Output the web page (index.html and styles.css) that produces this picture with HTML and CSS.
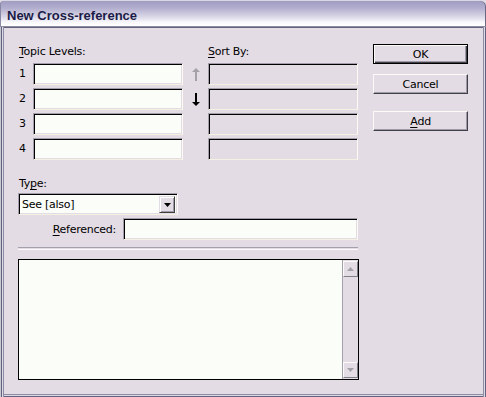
FILE: index.html
```html
<!DOCTYPE html>
<html lang="en">
<head>
  <meta charset="UTF-8">
  <title>New Cross-reference</title>
  <link rel="stylesheet" href="styles.css">
</head>
<body>
  <div class="dialog">
    <div class="titlebar">New Cross-reference</div>

    <div class="content">
      <div class="main">
        <div class="levels">
          <div class="label num-span"><u>T</u>opic Levels:</div>
          <div></div>
          <div class="label"><u>S</u>ort By:</div>

          <div class="num">1</div>
          <div class="edit"></div>
          <div class="arrow">
            <svg width="8" height="13" viewBox="0 0 8 13"><path d="M4 0 L8 4 L5 4 L5 13 L3 13 L3 4 L0 4 Z" fill="#a4a0a8"/></svg>
          </div>
          <div class="edit disabled"></div>

          <div class="num">2</div>
          <div class="edit"></div>
          <div class="arrow">
            <svg width="8" height="13" viewBox="0 0 8 13"><path d="M4 13 L8 9 L5 9 L5 0 L3 0 L3 9 L0 9 Z" fill="#000"/></svg>
          </div>
          <div class="edit disabled"></div>

          <div class="num">3</div>
          <div class="edit"></div>
          <div class="arrow"></div>
          <div class="edit disabled"></div>

          <div class="num">4</div>
          <div class="edit"></div>
          <div class="arrow"></div>
          <div class="edit disabled"></div>
        </div>

        <div class="label type-label">Ty<u>p</u>e:</div>
        <div class="select">
          <span class="select-text">See [also]</span>
          <span class="drop-btn">
            <svg width="7" height="4" viewBox="0 0 7 4"><path d="M0 0 H7 L3.5 4 Z" fill="#000"/></svg>
          </span>
        </div>

        <div class="ref-row">
          <span class="label"><u>R</u>eferenced:</span>
          <div class="edit ref-edit"></div>
        </div>

        <div class="separator"></div>

        <div class="listbox">
          <div class="list-area"></div>
          <div class="scrollbar">
            <div class="scroll-btn">
              <svg width="7" height="4" viewBox="0 0 7 4"><path d="M3.5 0 L7 4 H0 Z" fill="#a4a0a8"/></svg>
            </div>
            <div class="scroll-track"></div>
            <div class="scroll-btn">
              <svg width="7" height="4" viewBox="0 0 7 4"><path d="M0 0 H7 L3.5 4 Z" fill="#a4a0a8"/></svg>
            </div>
          </div>
        </div>
      </div>

      <div class="buttons">
        <div class="button default">OK</div>
        <div class="button">Cancel</div>
        <div class="button add"><u>A</u>dd</div>
      </div>
    </div>
  </div>
</body>
</html>
```

FILE: styles.css
```css
body {
  margin: 0;
  background: #e4dce4;
  font-family: "DejaVu Sans", sans-serif;
  font-size: 11px;
  letter-spacing: -0.25px;
  color: #000;
}
.dialog {
  width: 486px;
  height: 397px;
  display: flex;
  flex-direction: column;
  background: #e4dce4;
  box-sizing: border-box;
}
.titlebar {
  height: 27px;
  box-sizing: border-box;
  padding: 7px 0 0 7px;
  font-family: "Liberation Sans", sans-serif;
  font-weight: bold;
  font-size: 13px;
  letter-spacing: 0;
  color: #1c1c48;
  background: linear-gradient(#a09cc2 0%, #b4b0d0 30%, #dcdae8 65%, #f8f8fc 85%, #ffffff 100%);
  border-top: 1px solid #d8d8e4;
  border-bottom: 1px solid #8e8ca4;
  border-radius: 4px 6px 0 0;
  box-shadow: inset 1px 0 #8a88a4, inset -1px 0 #6a6884;
}
.content {
  flex: 1;
  display: flex;
  padding: 18px 0 0 18px;
  box-shadow: inset 1px 0 #c8c8d4, inset 2px 0 #62627c, inset 3px 0 #dcdae4, inset 4px 0 #8e8ca4,
              inset -1px 0 #62627c, inset -2px 0 #dcdae4, inset -3px 0 #8e8ca4,
              inset 0 -1px #62627c, inset 0 -2px #dcdae4, inset 0 -3px #8e8ca4,
              inset 0 1px #62627c;
}
.main {
  width: 340px;
}
.label {
  line-height: 13px;
}
.levels {
  display: grid;
  grid-template-columns: 15px 150px 25px 150px;
  grid-template-rows: 15px;
  grid-auto-rows: 22px;
  row-gap: 3px;
}
.num-span {
  grid-column: 1 / span 2;
  padding-left: 1px;
}
.num {
  line-height: 22px;
  padding-left: 1px;
}
.edit {
  box-sizing: border-box;
  background: #fbfdf9;
  border: 1px solid;
  border-color: #a49eac #fcfaf2 #f4f0e2 #a49eac;
  box-shadow: inset 1px 1px 0 #000, inset -1px -1px 0 #e4dce4;
}
.edit.disabled {
  background: #e4dce4;
}
.arrow {
  display: flex;
  align-items: center;
  justify-content: center;
  padding-left: 1px;
}
.type-label {
  margin-top: 17px;
  padding-left: 1px;
}
.select {
  margin-top: 3px;
  width: 160px;
  height: 22px;
  box-sizing: border-box;
  display: flex;
  align-items: center;
  background: #fbfdf9;
  border: 1px solid;
  border-color: #a49eac #fcfaf2 #f4f0e2 #a49eac;
  box-shadow: inset 1px 1px 0 #000, inset -1px -1px 0 #e4dce4;
  padding: 2px 2px 1px 2px;
}
.select-text {
  flex: 1;
  padding-left: 1px;
}
.drop-btn {
  width: 16px;
  height: 17px;
  box-sizing: border-box;
  display: flex;
  align-items: center;
  justify-content: center;
  background: #e4dce4;
  border: 1px solid;
  border-color: #e4dce4 #404040 #404040 #e4dce4;
  box-shadow: inset 1px 1px 0 #fff, inset -1px -1px 0 #a09aa8;
}
.ref-row {
  display: flex;
  align-items: center;
  margin-top: 3px;
}
.ref-row .label {
  width: 98px;
  text-align: right;
  padding-right: 7px;
}
.ref-edit {
  width: 235px;
  height: 22px;
}
.separator {
  margin-top: 7px;
  width: 340px;
  height: 1px;
  border-top: 1px solid #a4a0ac;
  border-bottom: 1px solid #fcfaf6;
}
.listbox {
  margin-top: 9px;
  width: 341px;
  height: 121px;
  box-sizing: border-box;
  display: flex;
  border: 1px solid #000;
  background: #fbfdf9;
}
.list-area {
  flex: 1;
}
.scrollbar {
  width: 16px;
  display: flex;
  flex-direction: column;
  background: #e4dce4;
  border-left: 1px solid #a4a0ac;
  box-sizing: border-box;
  padding: 1px 0;
}
.scroll-btn {
  height: 16px;
  box-sizing: border-box;
  display: flex;
  align-items: center;
  justify-content: center;
  background: #e4dce4;
  border: 1px solid;
  border-color: #fcfaf6 #808088 #808088 #fcfaf6;
}
.scroll-track {
  flex: 1;
}
.buttons {
  margin-left: 15px;
  margin-top: -1px;
  display: flex;
  flex-direction: column;
}
.button {
  width: 95px;
  height: 20px;
  box-sizing: border-box;
  display: flex;
  align-items: center;
  justify-content: center;
  background: #e4dce4;
  border: 1px solid;
  border-color: #fcfaf6 #404048 #404048 #fcfaf6;
  box-shadow: inset -1px -1px 0 #a09aa8;
  margin-bottom: 10px;
}
.button.default {
  border: 1px solid #000;
  box-shadow: inset 1px 1px 0 #fcfaf6, inset -1px -1px 0 #404048, inset -2px -2px 0 #a09aa8;
}
.button.add {
  margin-top: 7px;
}
u {
  text-decoration-thickness: 1px;
  text-underline-offset: 2px;
}
```
